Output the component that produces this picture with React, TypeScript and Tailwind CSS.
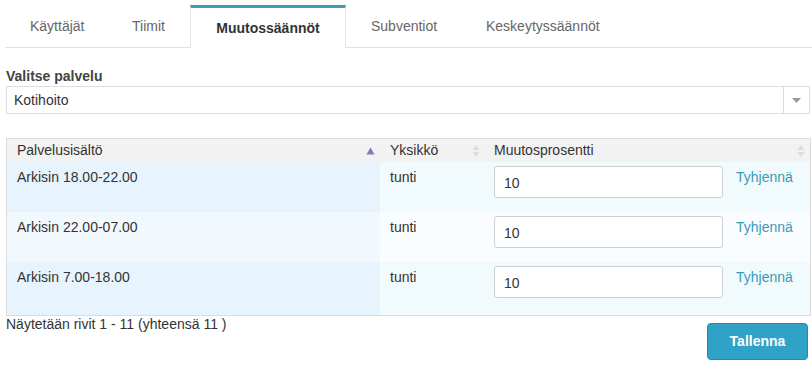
import { Fragment } from 'react'

const rows = [
  { label: 'Arkisin 18.00-22.00', unit: 'tunti', value: '10', odd: true, last: false },
  { label: 'Arkisin 22.00-07.00', unit: 'tunti', value: '10', odd: false, last: false },
  { label: 'Arkisin 7.00-18.00', unit: 'tunti', value: '10', odd: true, last: true },
]

function SortBoth() {
  return (
    <svg width="8" height="14" viewBox="0 0 8 14" className="text-[#dcdcdc]">
      <path d="M4 1 L7.5 6 H0.5 Z" fill="currentColor" />
      <path d="M4 13 L7.5 8 H0.5 Z" fill="currentColor" />
    </svg>
  )
}

function SortUp() {
  return (
    <svg width="9" height="8" viewBox="0 0 9 8" className="text-[#7a7fb8]">
      <path d="M4.5 0.5 L8.5 7.5 H0.5 Z" fill="currentColor" />
    </svg>
  )
}

export default function App() {
  return (
    <div className="w-[812px] h-[365px] bg-white text-[#333] text-[14px] font-['Liberation_Sans',Arial,sans-serif] overflow-hidden">
      {/* Tabs */}
      <div className="flex h-[48px] pt-[5px] ml-[5px] border-b border-[#e2e2e2] text-[#666]">
        <div className="w-[107px] flex items-center pl-[25px]">Käyttäjät</div>
        <div className="w-[78px] flex items-center pl-[20px]">Tiimit</div>
        <div className="w-[156px] -mb-px flex items-center justify-center bg-white border-t-[3px] border-t-[#3c9db3] border-x border-x-[#e2e2e2] font-bold text-[#333]">
          Muutossäännöt
        </div>
        <div className="w-[118px] flex items-center pl-[25px]">Subventiot</div>
        <div className="flex items-center pl-[22px]">Keskeytyssäännöt</div>
      </div>

      {/* Service select */}
      <div className="px-[6px] mt-[20px]">
        <div className="font-bold text-[#444] leading-[16px]">Valitse palvelu</div>
        <div className="mt-[2px] h-[28px] w-[804px] flex border border-[#dedede] bg-white">
          <div className="flex-1 flex items-center pl-[7px] text-[#333]">Kotihoito</div>
          <div className="w-[26px] flex items-center justify-center border-l border-[#dedede]">
            <svg width="9" height="5" viewBox="0 0 9 5">
              <path d="M0 0 H9 L4.5 5 Z" fill="#999" />
            </svg>
          </div>
        </div>
      </div>

      {/* Table */}
      <div className="ml-[6px] mt-[24px] w-[805px] border border-[#dcdcdc]">
        <div className="grid grid-cols-[373px_104px_1fr]">
          <div className="h-[23px] bg-[#f2f2f2] flex items-center justify-between pl-[10px] pr-[5px]">
            <span>Palvelusisältö</span>
            <SortUp />
          </div>
          <div className="h-[23px] bg-[#f2f2f2] flex items-center justify-between pl-[10px] pr-[4px]">
            <span>Yksikkö</span>
            <SortBoth />
          </div>
          <div className="h-[23px] bg-[#f2f2f2] flex items-center justify-between pl-[10px] pr-[5px]">
            <span>Muutosprosentti</span>
            <SortBoth />
          </div>
          {rows.map((r) => (
            <Fragment key={r.label}>
              <div
                className={`pl-[10px] pt-[5px] ${r.last ? 'h-[53px]' : 'h-[50px]'} ${
                  r.odd ? 'bg-[#e8f4fd]' : 'bg-[#f2f9fe]'
                }`}
              >
                {r.label}
              </div>
              <div className={`pl-[10px] pt-[5px] ${r.odd ? 'bg-[#f1fafd]' : 'bg-[#fafdff]'}`}>{r.unit}</div>
              <div className={`pl-[10px] pt-[4px] flex items-start ${r.odd ? 'bg-[#f1fafd]' : 'bg-[#fafdff]'}`}>
                <div className="w-[229px] h-[32px] bg-white border border-[#cfcfcf] rounded-[3px] flex items-center pl-[9px] pt-[2px]">
                  {r.value}
                </div>
                <a className="ml-[13px] mt-[1px] text-[#3a9bb5]">Tyhjennä</a>
              </div>
            </Fragment>
          ))}
        </div>
      </div>

      {/* Footer */}
      <div className="flex justify-between pl-[6px] pr-[4px]">
        <div className="leading-[16px]">Näytetään rivit 1 - 11 (yhteensä 11 )</div>
        <button className="mt-[7px] w-[101px] h-[37px] rounded-[4px] bg-[#2ea2c7] border border-[#2489aa] text-white font-bold">
          Tallenna
        </button>
      </div>
    </div>
  )
}
